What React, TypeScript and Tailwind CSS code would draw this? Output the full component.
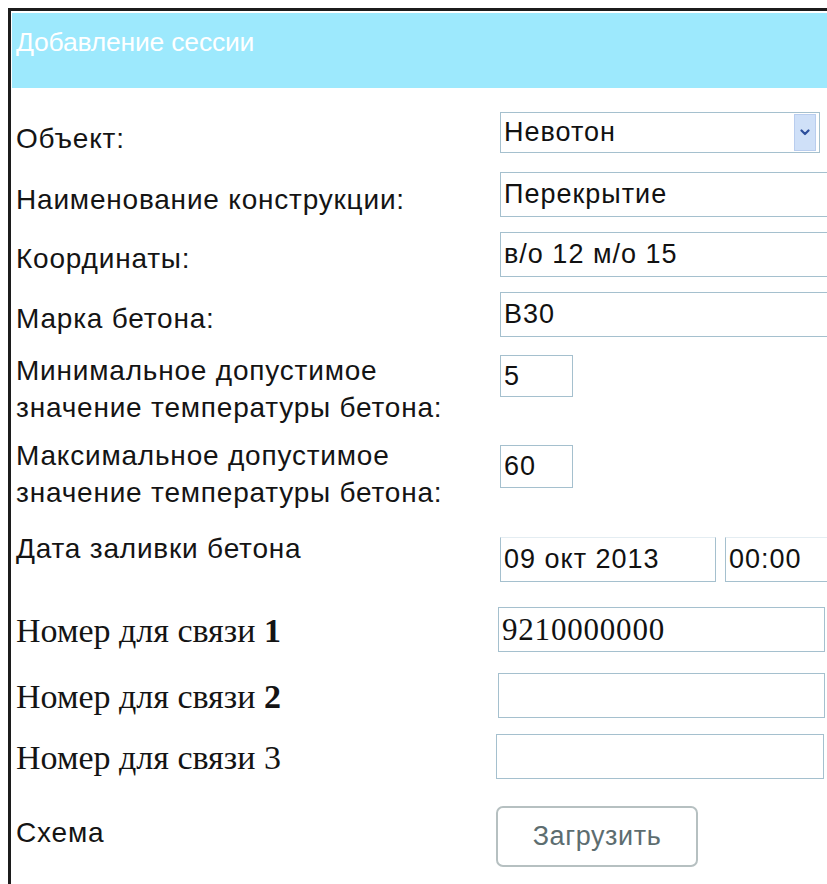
import React from "react";

const sans = "font-['Liberation_Sans',Arial,sans-serif]";
const serif = "font-['Liberation_Serif','Times_New_Roman',serif]";

const field =
  "block h-full w-full border border-[#a5c0ce] bg-white px-[3px] text-[27px] tracking-[1px] text-[#111] outline-none";

function TextBox({ value, className }: { value?: string; className: string }) {
  return (
    <div className={className}>
      <input readOnly defaultValue={value ?? ""} className={field} />
    </div>
  );
}

function Label({ children, className = "" }: { children: React.ReactNode; className?: string }) {
  return <div className={`w-[484px] shrink-0 leading-[37px] ${className}`}>{children}</div>;
}

function PhoneLabel({ n, bold }: { n: string; bold: boolean }) {
  return (
    <Label className={`${serif} pt-[5px] text-[34px] tracking-normal`}>
      Номер для связи <span className={bold ? "font-bold" : ""}>{n}</span>
    </Label>
  );
}

export default function App() {
  return (
    <div className={`min-h-[884px] w-[827px] overflow-hidden bg-white pl-2 pt-2 ${sans}`}>
      <div className="min-h-[876px] border-l-[3px] border-t-[3px] border-[#1c1c1c] pl-px pt-[2px]">
        {/* header bar */}
        <div className="h-[75px] bg-[#9de9fd] pl-[4px] pt-[14px] text-[26.5px] leading-[30px] tracking-[-0.2px] text-white">
          Добавление сессии
        </div>

        {/* form */}
        <div className="pl-[4px] text-[28px] tracking-[0.8px] text-[#141414]">
          {/* object select */}
          <div className="mt-[24px] flex h-[41px]">
            <Label className="pt-[8px]">Объект:</Label>
            <div className="flex h-[41px] w-[320px] items-stretch border border-[#a5c0ce] bg-white">
              <div className="flex-1 px-[3px] text-[27px] leading-[39px] tracking-[1px] text-[#111]">Невотон</div>
              <div className="my-px mr-[3px] flex w-[22px] items-center justify-center border border-[#b9cdee] bg-[#cfe0f8]">
                <svg width="10" height="7" viewBox="0 0 10 7">
                  <path d="M1.5 1.5 L5 5 L8.5 1.5" fill="none" stroke="#2d4f9c" strokeWidth="2.2" strokeLinecap="round" strokeLinejoin="round" />
                </svg>
              </div>
            </div>
          </div>

          <div className="mt-[19px] flex h-[45px]">
            <Label className="pt-[9px]">Наименование конструкции:</Label>
            <TextBox value="Перекрытие" className="h-[45px] w-[340px] shrink-0" />
          </div>

          <div className="mt-[15px] flex h-[45px]">
            <Label className="pt-[8px]">Координаты:</Label>
            <TextBox value="в/о 12 м/о 15" className="h-[45px] w-[340px] shrink-0" />
          </div>

          <div className="mt-[15px] flex h-[45px]">
            <Label className="pt-[8px]">Марка бетона:</Label>
            <TextBox value="B30" className="h-[45px] w-[340px] shrink-0" />
          </div>

          <div className="mt-[15px] flex h-[74px] items-start">
            <Label>
              Минимальное допустимое
              <br />
              значение температуры бетона:
            </Label>
            <TextBox value="5" className="mt-[3px] h-[42px] w-[73px] shrink-0" />
          </div>

          <div className="mt-[11px] flex h-[74px] items-start">
            <Label>
              Максимальное допустимое
              <br />
              значение температуры бетона:
            </Label>
            <TextBox value="60" className="mt-[8px] h-[43px] w-[73px] shrink-0" />
          </div>

          <div className="mt-[19px] flex h-[52px] items-start">
            <Label>Дата заливки бетона</Label>
            <div className="mt-[7px] flex h-[45px] shrink-0 gap-[9px]">
              <input
                readOnly
                defaultValue="09 окт 2013"
                className="h-full w-[216px] border border-[#a5c0ce] border-t-[#e4edf2] bg-white px-[3px] text-[27px] tracking-[1px] text-[#111] outline-none"
              />
              <input
                readOnly
                defaultValue="00:00"
                className="h-full w-[110px] border border-[#a5c0ce] border-t-[#e4edf2] bg-white px-[3px] text-[27px] tracking-[1px] text-[#111] outline-none"
              />
            </div>
          </div>

          <div className="mt-[25px] flex h-[45px] items-start">
            <PhoneLabel n="1" bold />
            <div className="-ml-[2px] h-[45px] w-[327px] shrink-0">
              <input
                readOnly
                defaultValue="9210000000"
                className={`block h-full w-full border border-[#a5c0ce] bg-white px-[3px] text-[31px] text-[#111] outline-none ${serif}`}
              />
            </div>
          </div>

          <div className="mt-[21px] flex h-[45px] items-start">
            <PhoneLabel n="2" bold />
            <TextBox className="-ml-[2px] h-[45px] w-[327px] shrink-0" />
          </div>

          <div className="mt-[16px] flex h-[45px] items-start">
            <PhoneLabel n="3" bold={false} />
            <TextBox className="-ml-[4px] h-[45px] w-[328px] shrink-0" />
          </div>

          <div className="mt-[27px] flex h-[61px] items-start">
            <Label className="pt-[8px]">Схема</Label>
            <button
              type="button"
              className="-ml-[4px] h-[61px] w-[202px] shrink-0 rounded-[7px] border-2 border-[#b6c0c1] bg-white text-[27px] tracking-[0.6px] text-[#5d6d70]"
            >
              Загрузить
            </button>
          </div>
        </div>
      </div>
    </div>
  );
}
